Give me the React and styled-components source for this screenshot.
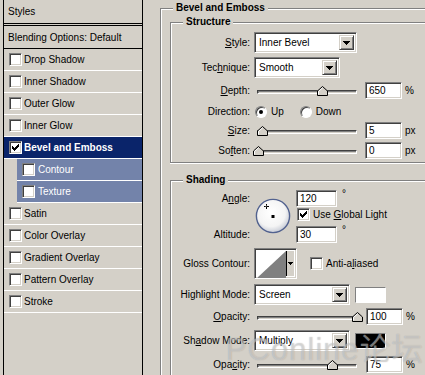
import React from "react";
import styled, { createGlobalStyle } from "styled-components";

const Global = createGlobalStyle`
  html, body { margin: 0; padding: 0; background: #d4d0c8; overflow: hidden; }
  body {
    width: 425px; height: 375px;
    font-family: "Liberation Sans", Arial, sans-serif;
    font-size: 10px; color: #000;
  }
`;

const Dialog = styled.div`
  position: relative;
  display: flex;
  align-items: flex-start;
  width: 425px;
  height: 375px;
  padding-left: 3px;
  box-sizing: border-box;
  overflow: hidden;
`;

/* ---------- left list ---------- */

const Sidebar = styled.div`
  flex: none;
  width: 140px;
  height: 375px;
  box-sizing: border-box;
  border-left: 1px solid #000;
  border-right: 1px solid #000;
`;

const Header = styled.div`
  height: 23px;
  border-bottom: 3px double #000;
  padding-left: 4px;
  display: flex;
  align-items: center;
`;

const Blending = styled.div`
  height: 22px;
  border-bottom: 1px solid #000;
  padding-left: 4px;
  display: flex;
  align-items: center;
`;

const Item = styled.div`
  height: 21px;
  border-bottom: 1px solid #fff;
  display: flex;
  align-items: center;
  gap: 2px;
  padding-left: 5px;
  background: ${(p) => (p.$active ? "#0a246a" : "transparent")};
  color: ${(p) => (p.$active ? "#fff" : "#000")};
  font-weight: ${(p) => (p.$active ? "bold" : "normal")};
`;

const SubItem = styled.div`
  height: 21px;
  margin-left: 13px;
  border-bottom: 1px solid #fff;
  display: flex;
  align-items: center;
  gap: 3px;
  padding-left: 5px;
  background: #7383aa;
  color: #fff;
`;

const Box = styled.span`
  flex: none;
  width: 13px;
  height: 13px;
  box-sizing: border-box;
  background: #fff;
  border: 1px solid;
  border-color: #808080 #fff #fff #808080;
  box-shadow: inset 1px 1px #404040, inset -1px -1px #d4d0c8;
  display: flex;
  align-items: center;
  justify-content: center;
  margin-left: ${(p) => p.$ml || 0}px;
`;

const checkPixels = [
  [6, 0], [5, 1], [6, 1], [0, 2], [4, 2], [5, 2], [6, 2],
  [0, 3], [1, 3], [3, 3], [4, 3], [5, 3], [0, 4], [1, 4], [2, 4], [3, 4], [4, 4],
  [1, 5], [2, 5], [3, 5], [2, 6],
];

const Check = ({ on, ml }) => (
  <Box $ml={ml}>
    {on && (
      <svg width="7" height="7" viewBox="0 0 7 7" shapeRendering="crispEdges">
        {checkPixels.map(([x, y]) => (
          <rect key={x + "-" + y} x={x} y={y} width="1" height="1" fill="#000" />
        ))}
      </svg>
    )}
  </Box>
);

const effects = [
  { name: "Drop Shadow" },
  { name: "Inner Shadow" },
  { name: "Outer Glow" },
  { name: "Inner Glow" },
  { name: "Bevel and Emboss", active: true, on: true },
  { name: "Contour", sub: true },
  { name: "Texture", sub: true },
  { name: "Satin" },
  { name: "Color Overlay" },
  { name: "Gradient Overlay" },
  { name: "Pattern Overlay" },
  { name: "Stroke" },
];

/* ---------- right side ---------- */

const Main = styled.div`
  flex: none;
  width: 265px;
  height: 367px;
  margin-left: 17px;
  margin-top: 8px;
  display: flex;
`;

/* group boxes run off the right (and bottom) edge of the dialog, so those sides are left open */
const Group = styled.div`
  flex: ${(p) => (p.$grow ? 1 : "none")};
  display: flex;
  flex-direction: column;
  box-sizing: border-box;
  margin-top: ${(p) => p.$mt || 0}px;
  padding: 0 0 ${(p) => p.$pb || 0}px ${(p) => p.$pl || 0}px;
  border: 1px solid #808080;
  border-right: none;
  border-bottom: ${(p) => (p.$open ? "none" : "1px solid #808080")};
  box-shadow: inset 1px 1px #fff, 0 1px #fff;
`;

const Legend = styled.div`
  width: fit-content;
  margin: -7px 0 0 ${(p) => p.$ml}px;
  padding: 0 3px;
  line-height: 12px;
  height: 12px;
  font-weight: bold;
  background: #d4d0c8;
`;

const Row = styled.div`
  display: grid;
  grid-template-columns: 79px auto;
  column-gap: 4px;
  align-items: center;
  height: ${(p) => p.$h}px;
  margin-top: ${(p) => p.$mt}px;
  flex: none;
`;

const Label = styled.div`
  text-align: right;
  white-space: nowrap;
`;

const Controls = styled.div`
  display: flex;
  align-items: center;
  height: 100%;
  white-space: nowrap;
`;

const Sunken = styled.div`
  box-sizing: border-box;
  background: #fff;
  border: 1px solid;
  border-color: #808080 #fff #fff #808080;
  box-shadow: inset 1px 1px #404040, inset -1px -1px #d4d0c8;
`;

const SelectBox = styled(Sunken)`
  width: ${(p) => p.$w}px;
  height: 21px;
  padding: 2px;
  display: flex;
  align-items: center;
  justify-content: space-between;
  span { padding-left: 2px; }
`;

const DropButton = styled.div`
  box-sizing: border-box;
  width: 15px;
  height: 100%;
  background: #d4d0c8;
  border: 1px solid;
  border-color: #d4d0c8 #404040 #404040 #d4d0c8;
  box-shadow: inset 1px 1px #fff, inset -1px -1px #808080;
  display: flex;
  align-items: center;
  justify-content: center;
`;

const Arrow = ({ small }) =>
  small ? (
    <svg width="5" height="3" viewBox="0 0 5 3" shapeRendering="crispEdges">
      <rect x="0" y="0" width="5" height="1" />
      <rect x="1" y="1" width="3" height="1" />
      <rect x="2" y="2" width="1" height="1" />
    </svg>
  ) : (
    <svg width="7" height="4" viewBox="0 0 7 4" shapeRendering="crispEdges">
      <rect x="0" y="0" width="7" height="1" />
      <rect x="1" y="1" width="5" height="1" />
      <rect x="2" y="2" width="3" height="1" />
      <rect x="3" y="3" width="1" height="1" />
    </svg>
  );

const Select = ({ w, value }) => (
  <SelectBox $w={w}>
    <span>{value}</span>
    <DropButton>
      <Arrow />
    </DropButton>
  </SelectBox>
);

const NumberBox = styled(Sunken)`
  width: ${(p) => p.$w || 37}px;
  height: 17px;
  padding-left: 3px;
  display: flex;
  align-items: center;
`;

const Unit = styled.span`
  margin-left: ${(p) => p.$ml || 3}px;
  align-self: ${(p) => (p.$top ? "flex-start" : "center")};
  margin-top: ${(p) => (p.$top ? "-2px" : "0")};
`;

const Track = styled.div`
  position: relative;
  flex: none;
  width: 100px;
  height: 4px;
  margin-left: 3px;
  margin-right: ${(p) => p.$mr}px;
  box-sizing: border-box;
  background: #d4d0c8;
  border: 1px solid;
  border-color: #404040 #fff #fff #404040;
  box-shadow: inset 1px 1px #808080;
  top: 1px;
`;

const Thumb = styled.svg`
  position: absolute;
  top: -5px;
`;

const Slider = ({ pct, value, unit, mr = 8 }) => (
  <Controls>
    <Track $mr={mr}>
      <Thumb width="11" height="10" viewBox="0 0 11 10" style={{ left: pct - 6.5 }}>
        <polygon points="5.5,0.5 10.5,5 10.5,9.5 0.5,9.5 0.5,5" fill="#d4d0c8" stroke="#000" />
        <polyline points="1.5,8.5 1.5,5.4 5.5,1.8" fill="none" stroke="#fff" />
      </Thumb>
    </Track>
    <NumberBox>{value}</NumberBox>
    <Unit>{unit}</Unit>
  </Controls>
);

const Radio = styled.span`
  flex: none;
  width: 12px;
  height: 12px;
  box-sizing: border-box;
  border-radius: 50%;
  background: #fff;
  border: 1px solid;
  border-color: #808080 #fff #fff #808080;
  box-shadow: inset 1px 1px #404040;
  display: flex;
  align-items: center;
  justify-content: center;
  margin-left: ${(p) => p.$ml}px;
  margin-right: 4px;
  &::after {
    content: "";
    display: ${(p) => (p.$on ? "block" : "none")};
    width: 4px;
    height: 4px;
    border-radius: 50%;
    background: #000;
  }
`;

const AngleGrid = styled.div`
  display: grid;
  grid-template-columns: 79px 38px auto;
  grid-template-rows: 16px 20px 16px;
  column-gap: 4px;
  align-items: center;
  margin-top: 4px;
  flex: none;
`;

const Dial = styled.svg`
  grid-column: 2;
  grid-row: 1 / 4;
  align-self: start;
  margin: 8px 0 0 1px;
`;

const CheckLine = styled.div`
  grid-column: 3;
  grid-row: 2;
  display: flex;
  align-items: center;
  gap: 3px;
  align-self: start;
  margin-top: 2px;
  white-space: nowrap;
`;

const Cell = styled.div`
  grid-column: ${(p) => p.$col};
  grid-row: ${(p) => p.$row};
`;

const Contour = styled(Sunken)`
  width: 43px;
  height: 31px;
  padding: 2px;
  display: flex;
  svg { display: block; }
`;

const ContourDrop = styled.div`
  flex: 1;
  border-left: 1px solid #000;
  background: #d4d0c8;
  display: flex;
  align-items: center;
  justify-content: center;
`;

const Swatch = styled.div`
  width: 31px;
  height: 16px;
  margin-left: 5px;
  box-sizing: border-box;
  border: 1px solid;
  border-color: #808080 #fff #fff #808080;
  background: ${(p) => p.$color};
`;

const Watermark = styled.div`
  position: absolute;
  left: 226px;
  top: 324px;
  font-family: "Liberation Sans", "Noto Sans CJK SC", sans-serif;
  font-size: 31px;
  letter-spacing: 1px;
  color: rgba(255, 255, 255, 0.4);
  text-shadow: 0 0 1px rgba(90, 90, 90, 0.45);
  pointer-events: none;
  white-space: nowrap;
`;

export default function App() {
  return (
    <>
      <Global />
      <Dialog>
        <Sidebar>
          <Header>Styles</Header>
          <Blending>Blending Options: Default</Blending>
          {effects.map((e) =>
            e.sub ? (
              <SubItem key={e.name}>
                <Check />
                {e.name}
              </SubItem>
            ) : (
              <Item key={e.name} $active={e.active}>
                <Check on={e.on} />
                {e.name}
              </Item>
            )
          )}
        </Sidebar>

        <Main>
          <Group $grow $open $pl={9}>
            <Legend $ml={3}>Bevel and Emboss</Legend>

            <Group $mt={8} $pb={4}>
              <Legend $ml={12}>Structure</Legend>
              <Row $h={21} $mt={4}>
                <Label><u>S</u>tyle:</Label>
                <Controls><Select w={103} value="Inner Bevel" /></Controls>
              </Row>
              <Row $h={21} $mt={4}>
                <Label>Tec<u>h</u>nique:</Label>
                <Controls><Select w={86} value="Smooth" /></Controls>
              </Row>
              <Row $h={17} $mt={4}>
                <Label><u>D</u>epth:</Label>
                <Slider pct={65} value="650" unit="%" />
              </Row>
              <Row $h={17} $mt={4}>
                <Label>Direction:</Label>
                <Controls>
                  <Radio $ml={1} $on />
                  <span>Up</span>
                  <Radio $ml={16} />
                  <span>Down</span>
                </Controls>
              </Row>
              <Row $h={16} $mt={2}>
                <Label><u>S</u>ize:</Label>
                <Slider pct={5} value="5" unit="px" />
              </Row>
              <Row $h={16} $mt={4}>
                <Label>So<u>f</u>ten:</Label>
                <Slider pct={1} value="0" unit="px" />
              </Row>
            </Group>

            <Group $grow $open $mt={17}>
              <Legend $ml={12}>Shading</Legend>
              <AngleGrid>
                <Label>A<u>n</u>gle:</Label>
                <Dial width="36" height="36" viewBox="0 0 36 36">
                  <defs>
                    <radialGradient id="dialFill" cx="0.45" cy="0.4" r="0.6">
                      <stop offset="0" stopColor="#ffffff" />
                      <stop offset="0.7" stopColor="#f4f4f4" />
                      <stop offset="1" stopColor="#c8ccd6" />
                    </radialGradient>
                  </defs>
                  <circle cx="18" cy="18" r="16.6" fill="url(#dialFill)" stroke="#52628f" strokeWidth="1.4" />
                  <path d="M11 5.5v5M8.5 8h5" stroke="#000" strokeWidth="1" shapeRendering="crispEdges" />
                  <rect x="10.5" y="7.5" width="1" height="1" fill="#fff" />
                  <rect x="16.5" y="17" width="3" height="3" fill="#000" />
                </Dial>
                <Controls>
                  <NumberBox $w={41}>120</NumberBox>
                  <Unit $ml={5} $top>°</Unit>
                </Controls>
                <CheckLine>
                  <Check on ml={1} />
                  <span>Use <u>G</u>lobal Light</span>
                </CheckLine>
                <Cell $col={1} $row={3}>
                  <Label>Altitude:</Label>
                </Cell>
                <Cell $col={3} $row={3}>
                  <Controls>
                    <NumberBox $w={41}>30</NumberBox>
                    <Unit $ml={5} $top>°</Unit>
                  </Controls>
                </Cell>
              </AngleGrid>

              <Row $h={31} $mt={6}>
                <Label>Gloss Contour:</Label>
                <Controls>
                  <Contour>
                    <svg width="29" height="27" viewBox="0 0 29 27">
                      <rect width="29" height="27" fill="#fff" />
                      <polygon points="0,27 29,0 29,27" fill="#808080" />
                    </svg>
                    <ContourDrop>
                      <Arrow small />
                    </ContourDrop>
                  </Contour>
                  <Check ml={13} />
                  <span style={{ marginLeft: 3 }}>Anti-a<u>l</u>iased</span>
                </Controls>
              </Row>

              <Row $h={21} $mt={5}>
                <Label>Highlight Mode:</Label>
                <Controls>
                  <Select w={96} value="Screen" />
                  <Swatch $color="#fff" />
                </Controls>
              </Row>
              <Row $h={16} $mt={3}>
                <Label><u>O</u>pacity:</Label>
                <Slider pct={100} value="100" unit="%" mr={9} />
              </Row>
              <Row $h={21} $mt={6}>
                <Label>Sh<u>a</u>dow Mode:</Label>
                <Controls>
                  <Select w={96} value="Multiply" />
                  <Swatch $color="#000" />
                </Controls>
              </Row>
              <Row $h={16} $mt={5}>
                <Label>Opa<u>c</u>ity:</Label>
                <Slider pct={75} value="75" unit="%" mr={9} />
              </Row>
            </Group>
          </Group>
        </Main>

        <Watermark>PConline论坛</Watermark>
      </Dialog>
    </>
  );
}
